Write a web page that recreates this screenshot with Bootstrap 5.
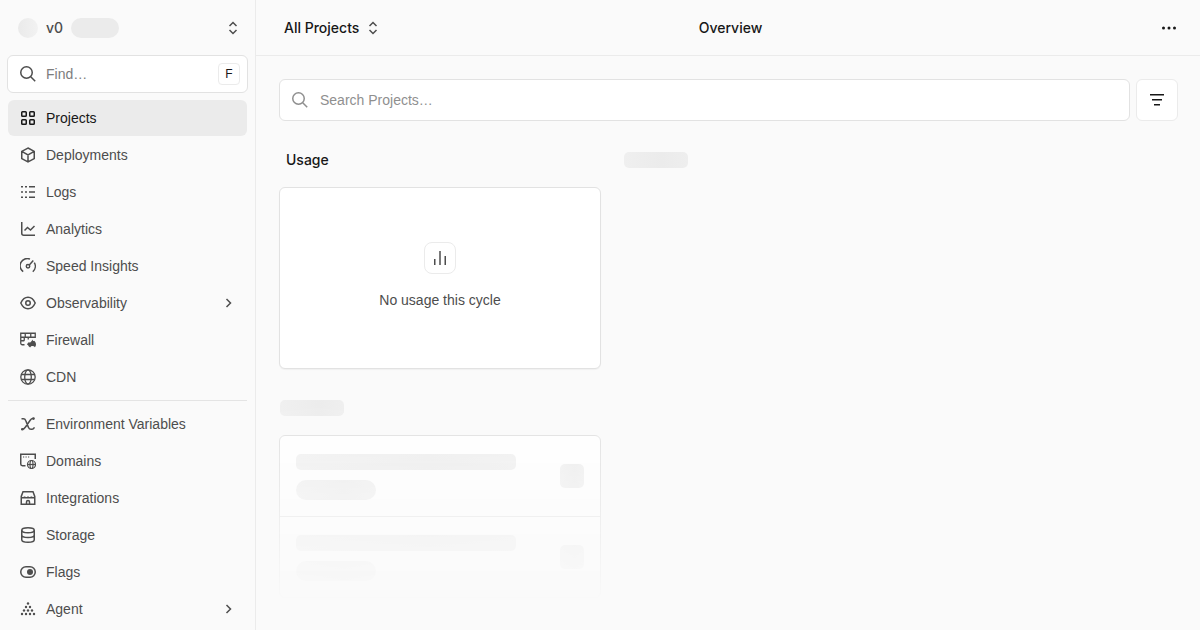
<!DOCTYPE html>
<html lang="en">
<head>
<meta charset="utf-8">
<meta name="viewport" content="width=device-width, initial-scale=1">
<title>Overview</title>
<link href="https://cdn.jsdelivr.net/npm/bootstrap@5.3.0/dist/css/bootstrap.min.css" rel="stylesheet">
<style>
  :root { --ink: #171717; --ink-2: #4d4d4d; --ink-3: #8f8f8f; --line: #ebebeb; --ring: #e2e2e2; --page: #fafafa; --bone: #ebebeb; }
  body { background: var(--page); color: var(--ink); font-family: "Liberation Sans", Arial, sans-serif; font-size: 14px; line-height: 20px; overflow: hidden; }
  .fw-medium { font-family: Inter, "Liberation Sans", sans-serif; font-weight: 500; }
  svg { display: block; flex: none; fill: none; stroke: currentColor; stroke-width: 1.5; }
  svg .solid { fill: currentColor; stroke: none; }
  .btn { --bs-btn-font-size: 14px; --bs-btn-line-height: 20px; --bs-btn-color: var(--ink); border: 0; padding: 0; }
  .sidebar { width: 256px; border-right: 1px solid var(--line); }
  .team-switch { height: 40px; padding: 0 6px 0 10px; }
  .team-switch, .muted-ink { color: var(--ink-2); }
  .bone { background: linear-gradient(90deg, #efefef, var(--bone) 60%, #eeeeee); border-radius: 5px; }
  .avatar-bone { width: 20px; height: 20px; border-radius: 50%; background: linear-gradient(90deg, #eaeaea, #f2f2f2); }
  .plan-bone { width: 48px; height: 20px; border-radius: 10px; background: var(--bone); }
  .field { background: #fff; border: 1px solid var(--ring); border-radius: 6px; padding-left: 12px; gap: 12px; }
  .field input { font-size: 14px; line-height: 20px; color: var(--ink); outline: 0; }
  .field input::placeholder { color: var(--ink-3); opacity: 1; }
  .find { height: 38px; margin: 7px -1px; padding-right: 7px; gap: 10px; }
  .find input::placeholder { color: #7d7d7d; }
  .find kbd { width: 22px; height: 22px; font: inherit; font-size: 12px; color: var(--ink); background: #fff; border: 1px solid var(--line); border-radius: 4px; }
  .side-nav { gap: 1px; }
  .side-nav .nav-link { height: 36px; padding: 0 10px 0 12px; gap: 10px; border-radius: 6px; color: var(--ink-2); }
  .side-nav .nav-link.active { background: var(--line); color: var(--ink); }
  .side-nav hr { margin: 4px 0; color: #e4e4e4; opacity: 1; }
  .topbar { height: 56px; border-bottom: 1px solid var(--line); padding: 0 23px 0 28px; }
  .topbar > * { flex: 1 1 0; }
  .content { padding: 23px 22px 0 23px; }
  .search { height: 42px; }
  .filter { width: 42px; height: 42px; background: #fff; border: 1px solid var(--line); border-radius: 6px; }
  .board { display: grid; grid-template-columns: minmax(0, 322px) 1fr; column-gap: 23px; padding-top: 29px; }
  .board h2 { font-size: 14px; line-height: 20px; margin: 0 7px 17px; }
  .panel { background: #fff; border: 1px solid var(--ring); border-radius: 6px; }
  .usage { height: 182px; padding-bottom: 4px; box-shadow: 0 1px 1px rgba(0, 0, 0, .04); }
  .usage-icon { width: 32px; height: 32px; border: 1px solid var(--line); border-radius: 8px; }
  .loading { margin-top: 23px; padding-top: 8px; -webkit-mask-image: linear-gradient(#000, transparent 104%); mask-image: linear-gradient(#000, transparent 104%); }
  .title-bone { width: 64px; height: 16px; }
  .loading .title-bone { margin: 0 1px 19px; }
  .loading .panel { border-color: #dedede; }
  .loading-row { box-sizing: content-box; height: 80px; padding: 0 16px; }
  .loading-row + .loading-row { border-top: 1px solid var(--ring); }
  .line-bone { width: 220px; height: 16px; margin-top: 2px; }
  .pill-bone { width: 80px; height: 20px; border-radius: 10px; margin-top: 10px; }
  .box-bone { width: 24px; height: 24px; }
  .side-bone { margin-top: 2px; }
</style>
</head>
<body>
<div class="d-flex min-vh-100">
  <aside class="sidebar flex-shrink-0 vh-100 px-2 pt-2 overflow-hidden">
    <button type="button" class="btn team-switch w-100 d-flex align-items-center gap-2">
      <span class="avatar-bone"></span>
      <span class="fw-medium">v0</span>
      <span class="plan-bone"></span>
      <svg class="ms-auto" width="16" height="16" viewBox="0 0 16 16"><path d="M4.500 6 8 2.500 11.500 6M4.500 10 8 13.500 11.500 10"/></svg>
    </button>
    <div class="field find d-flex align-items-center">
      <svg class="muted-ink" width="16" height="16" viewBox="0 0 16 16"><circle cx="6.500" cy="6.500" r="5.750"/><path d="m10.700 10.700 4.500 4.500"/></svg>
      <input class="border-0 bg-transparent p-0 flex-fill w-50" type="text" placeholder="Find…" aria-label="Find">
      <kbd class="d-flex align-items-center justify-content-center p-0">F</kbd>
    </div>
    <nav class="nav side-nav flex-column flex-nowrap" aria-label="Team">
      <a class="nav-link d-flex align-items-center active" aria-current="page" href="#"><svg width="16" height="16" viewBox="0 0 16 16"><rect x="1.750" y="1.750" width="4.500" height="4.500" rx=".8"/><rect x="9.750" y="1.750" width="4.500" height="4.500" rx=".8"/><rect x="1.750" y="9.750" width="4.500" height="4.500" rx=".8"/><rect x="9.750" y="9.750" width="4.500" height="4.500" rx=".8"/></svg>Projects</a>
      <a class="nav-link d-flex align-items-center" href="#"><svg width="16" height="16" viewBox="0 0 16 16"><path d="m8 1 6.250 3.400v7.200L8 15l-6.250-3.400V4.400zM1.750 4.400 8 8l6.250-3.600M8 8v7"/></svg>Deployments</a>
      <a class="nav-link d-flex align-items-center" href="#"><svg width="16" height="16" viewBox="0 0 16 16"><path d="M1 2.750h2m2 0h2m2 0h6M1 8h2m2 0h2m2 0h6M1 13.250h2m2 0h2m2 0h6"/></svg>Logs</a>
      <a class="nav-link d-flex align-items-center" href="#"><svg width="16" height="16" viewBox="0 0 16 16"><path d="M1.750 1v11.250c0 1.100.9 2 2 2H15M4.500 9.500l3-3 3 2.500 4-4"/></svg>Analytics</a>
      <a class="nav-link d-flex align-items-center" href="#"><svg width="16" height="16" viewBox="0 0 16 16"><path d="M3.200 13.700A7.200 7.200 0 0 1 10 1.100M14.300 4.600a7.200 7.200 0 0 1-1.500 9.100M9.300 6.900l4-4.400"/><circle cx="8" cy="8.250" r="1.700"/></svg>Speed Insights</a>
      <a class="nav-link d-flex align-items-center" href="#"><svg width="16" height="16" viewBox="0 0 16 16"><path d="M.8 8C2.500 4.200 5 2.250 8 2.250S13.500 4.200 15.200 8C13.500 11.800 11 13.750 8 13.750S2.500 11.800.8 8z"/><circle cx="8" cy="8" r="2.250"/></svg>Observability<svg class="ms-auto" width="16" height="16" viewBox="0 0 16 16"><path d="M5.500 4 9.500 8l-4 4"/></svg></a>
      <a class="nav-link d-flex align-items-center" href="#"><svg width="16" height="16" viewBox="0 0 16 16"><path d="M4.500 12.750H2.250a1.500 1.500 0 0 1-1.500-1.500V1.250h14.500V6M.75 5.250h14.500M5.250 1.250v4M10.750 1.250v4M.75 8.750h3.500M4.250 5.250v3.500M8.250 5.250v2.250" stroke-width="1.300"/><path class="solid" d="M12.500 7.500c.2 1.500 1.500 1.700 1.800 1.300.8 1 1.700 2 1.700 3.700 0 1-.4 2-1.100 2.700-.5-.8-1.300-1.200-2.400-1.200-1.300 0-2 .7-2.400 1.500-.8-.6-1.600-1-2.100-2.500h-.8c-.2-1.500 1-2.500 1.800-2.800.5.500 1 .3 1.500 0 .9-.6 1.500-1.500 2-2.700z"/></svg>Firewall</a>
      <a class="nav-link d-flex align-items-center" href="#"><svg width="16" height="16" viewBox="0 0 16 16"><g stroke-width="1.300"><circle cx="8" cy="8" r="7.200"/><ellipse cx="8" cy="8" rx="3.300" ry="7.200"/><path d="M1.400 5.500h13.200M1.400 10.500h13.200"/></g></svg>CDN</a>
      <hr>
      <a class="nav-link d-flex align-items-center" href="#"><svg width="16" height="16" viewBox="0 0 16 16"><path d="M1.500 2.750h1.800c1.200 0 2 .6 2.400 1.700l2.800 7c.5 1.200 1.300 1.800 2.500 1.800h.8c1.500 0 2.200-.7 2.400-2M13.500 2.600c-1.500-.3-2.300.2-3.300 1.600L5.500 11c-1 1.500-1.800 2.300-3.300 2.300"/><circle class="solid" cx="13.500" cy="2.600" r="1.300"/><circle class="solid" cx="2.300" cy="13.300" r="1.300"/></svg>Environment Variables</a>
      <a class="nav-link d-flex align-items-center" href="#"><svg width="16" height="16" viewBox="0 0 16 16"><path d="M5.500 12.750h-3c-1 0-1.750-.7-1.750-1.700V1.250h14.500V6"/><path d="M3 4h1.200m1.300 0h1.200m1.300 0h1.200" stroke-width="1.200"/><g stroke-width="1.200"><circle cx="11.500" cy="11.500" r="4"/><ellipse cx="11.500" cy="11.500" rx="1.500" ry="4"/><path d="M7.500 11.500h8"/></g></svg>Domains</a>
      <a class="nav-link d-flex align-items-center" href="#"><svg width="16" height="16" viewBox="0 0 16 16"><path d="M1.250 6.500v7.750h13.500V6.500L13 1.750H3L1.250 6.500c0 1 .7 1.250 1.600 1.250S4.600 7.300 4.600 6.500c0 .8.800 1.250 1.700 1.250S8 7.300 8 6.500c0 .8.800 1.250 1.700 1.250s1.700-.45 1.700-1.250c0 .8.800 1.250 1.700 1.250s1.650-.25 1.650-1.250"/><path d="M6.500 14v-2a1.500 1.500 0 0 1 3 0v2"/></svg>Integrations</a>
      <a class="nav-link d-flex align-items-center" href="#"><svg width="16" height="16" viewBox="0 0 16 16"><ellipse cx="8" cy="3.250" rx="6.250" ry="2.500"/><path d="M1.750 3.250v9.500c0 1.400 2.800 2.500 6.250 2.500s6.250-1.100 6.250-2.500v-9.500M1.750 8c0 1.400 2.800 2.500 6.250 2.500S14.250 9.400 14.250 8"/></svg>Storage</a>
      <a class="nav-link d-flex align-items-center" href="#"><svg width="16" height="16" viewBox="0 0 16 16"><rect x=".75" y="2.750" width="14.500" height="10.500" rx="5.250"/><circle class="solid" cx="10" cy="8" r="3"/></svg>Flags</a>
      <a class="nav-link d-flex align-items-center" href="#"><svg width="16" height="16" viewBox="0 0 16 16"><g class="solid"><circle cx="8" cy="2.500" r="1.200"/><circle cx="6" cy="6" r="1.200"/><circle cx="10" cy="6" r="1.200"/><circle cx="4" cy="9.500" r="1.200"/><circle cx="8" cy="9.500" r="1.200"/><circle cx="12" cy="9.500" r="1.200"/><circle cx="2" cy="13" r="1.200"/><circle cx="6" cy="13" r="1.200"/><circle cx="10" cy="13" r="1.200"/><circle cx="14" cy="13" r="1.200"/></g></svg>Agent<svg class="ms-auto" width="16" height="16" viewBox="0 0 16 16"><path d="M5.500 4 9.500 8l-4 4"/></svg></a>
    </nav>
  </aside>
  <div class="flex-fill" style="min-width: 0">
    <header class="topbar d-flex align-items-center">
      <div class="d-flex"><button type="button" class="btn fw-medium d-flex align-items-center gap-2 text-nowrap">All Projects<svg class="muted-ink" width="12" height="16" viewBox="2 0 12 16"><path d="M4.500 6 8 2.500 11.500 6M4.500 10 8 13.500 11.500 10"/></svg></button></div>
      <div class="text-center fw-medium">Overview</div>
      <div class="d-flex justify-content-end"><button type="button" class="btn" aria-label="More"><svg width="16" height="16" viewBox="0 0 16 16"><g class="solid"><circle cx="2.500" cy="8" r="1.500"/><circle cx="8" cy="8" r="1.500"/><circle cx="13.500" cy="8" r="1.500"/></g></svg></button></div>
    </header>
    <main class="content">
      <form class="d-flex" style="gap: 6px">
        <div class="field search flex-fill d-flex align-items-center">
          <svg width="16" height="16" viewBox="0 0 16 16" color="#8f8f8f"><circle cx="6.500" cy="6.500" r="5.750"/><path d="m10.700 10.700 4.500 4.500"/></svg>
          <input class="border-0 bg-transparent p-0 flex-fill" type="text" placeholder="Search Projects…" aria-label="Search Projects">
        </div>
        <button type="button" class="btn filter d-flex align-items-center justify-content-center" aria-label="Filter"><svg width="16" height="16" viewBox="0 0 16 16"><path d="M1 2.750h14M3 7.750h10M5 12.750h6"/></svg></button>
      </form>
      <div class="board">
        <div>
          <h2 class="fw-medium">Usage</h2>
          <div class="panel usage d-flex flex-column align-items-center justify-content-center">
            <div class="usage-icon d-flex align-items-center justify-content-center muted-ink"><svg width="16" height="16" viewBox="0 0 16 16"><path d="M2.750 9v6M8 1v14M13.250 6v9"/></svg></div>
            <div class="mt-3 muted-ink">No usage this cycle</div>
          </div>
          <div class="loading" aria-hidden="true">
            <div class="bone title-bone"></div>
            <div class="panel">
              <div class="loading-row d-flex align-items-center justify-content-between"><div><div class="bone line-bone"></div><div class="bone pill-bone"></div></div><div class="bone box-bone"></div></div>
              <div class="loading-row d-flex align-items-center justify-content-between"><div><div class="bone line-bone"></div><div class="bone pill-bone"></div></div><div class="bone box-bone"></div></div>
            </div>
          </div>
        </div>
        <div><div class="bone title-bone side-bone"></div></div>
      </div>
    </main>
  </div>
</div>
<script src="https://cdn.jsdelivr.net/npm/bootstrap@5.3.0/dist/js/bootstrap.bundle.min.js"></script>
</body>
</html>
